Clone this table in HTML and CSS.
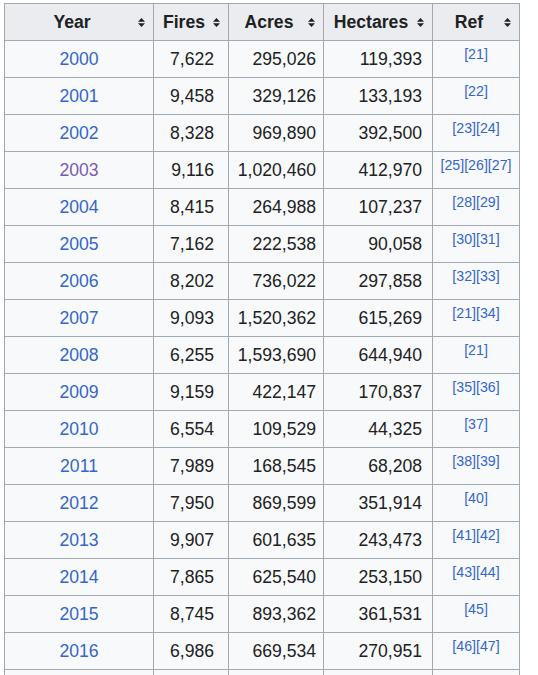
FILE: index.html
```html
<!DOCTYPE html>
<html lang="en">
<head>
  <meta charset="UTF-8" />
  <title>California wildfires by year</title>
  <link rel="stylesheet" href="styles.css">
</head>
<body>

  <table class="wikitable">
    <colgroup>
      <col class="c-year">
      <col class="c-fires">
      <col class="c-acres">
      <col class="c-hectares">
      <col class="c-ref">
    </colgroup>
    <thead>
      <tr>
        <th>Year<svg class="sort" viewBox="0 0 7 9"><polygon points="3.5,0 7,3.8 0,3.8"/><polygon points="0,5.2 7,5.2 3.5,9"/></svg></th>
        <th>Fires<svg class="sort" viewBox="0 0 7 9"><polygon points="3.5,0 7,3.8 0,3.8"/><polygon points="0,5.2 7,5.2 3.5,9"/></svg></th>
        <th>Acres<svg class="sort" viewBox="0 0 7 9"><polygon points="3.5,0 7,3.8 0,3.8"/><polygon points="0,5.2 7,5.2 3.5,9"/></svg></th>
        <th>Hectares<svg class="sort" viewBox="0 0 7 9"><polygon points="3.5,0 7,3.8 0,3.8"/><polygon points="0,5.2 7,5.2 3.5,9"/></svg></th>
        <th>Ref<svg class="sort" viewBox="0 0 7 9"><polygon points="3.5,0 7,3.8 0,3.8"/><polygon points="0,5.2 7,5.2 3.5,9"/></svg></th>
      </tr>
    </thead>
    <tbody>
      <tr><td class="year"><a href="#">2000</a></td><td class="fires">7,622</td><td class="acres">295,026</td><td class="hectares">119,393</td><td class="ref"><a href="#">[21]</a></td></tr>
      <tr><td class="year"><a href="#">2001</a></td><td class="fires">9,458</td><td class="acres">329,126</td><td class="hectares">133,193</td><td class="ref"><a href="#">[22]</a></td></tr>
      <tr><td class="year"><a href="#">2002</a></td><td class="fires">8,328</td><td class="acres">969,890</td><td class="hectares">392,500</td><td class="ref"><a href="#">[23]</a><a href="#">[24]</a></td></tr>
      <tr><td class="year"><a href="#" class="visited">2003</a></td><td class="fires">9,116</td><td class="acres">1,020,460</td><td class="hectares">412,970</td><td class="ref"><a href="#">[25]</a><a href="#">[26]</a><a href="#">[27]</a></td></tr>
      <tr><td class="year"><a href="#">2004</a></td><td class="fires">8,415</td><td class="acres">264,988</td><td class="hectares">107,237</td><td class="ref"><a href="#">[28]</a><a href="#">[29]</a></td></tr>
      <tr><td class="year"><a href="#">2005</a></td><td class="fires">7,162</td><td class="acres">222,538</td><td class="hectares">90,058</td><td class="ref"><a href="#">[30]</a><a href="#">[31]</a></td></tr>
      <tr><td class="year"><a href="#">2006</a></td><td class="fires">8,202</td><td class="acres">736,022</td><td class="hectares">297,858</td><td class="ref"><a href="#">[32]</a><a href="#">[33]</a></td></tr>
      <tr><td class="year"><a href="#">2007</a></td><td class="fires">9,093</td><td class="acres">1,520,362</td><td class="hectares">615,269</td><td class="ref"><a href="#">[21]</a><a href="#">[34]</a></td></tr>
      <tr><td class="year"><a href="#">2008</a></td><td class="fires">6,255</td><td class="acres">1,593,690</td><td class="hectares">644,940</td><td class="ref"><a href="#">[21]</a></td></tr>
      <tr><td class="year"><a href="#">2009</a></td><td class="fires">9,159</td><td class="acres">422,147</td><td class="hectares">170,837</td><td class="ref"><a href="#">[35]</a><a href="#">[36]</a></td></tr>
      <tr><td class="year"><a href="#">2010</a></td><td class="fires">6,554</td><td class="acres">109,529</td><td class="hectares">44,325</td><td class="ref"><a href="#">[37]</a></td></tr>
      <tr><td class="year"><a href="#">2011</a></td><td class="fires">7,989</td><td class="acres">168,545</td><td class="hectares">68,208</td><td class="ref"><a href="#">[38]</a><a href="#">[39]</a></td></tr>
      <tr><td class="year"><a href="#">2012</a></td><td class="fires">7,950</td><td class="acres">869,599</td><td class="hectares">351,914</td><td class="ref"><a href="#">[40]</a></td></tr>
      <tr><td class="year"><a href="#">2013</a></td><td class="fires">9,907</td><td class="acres">601,635</td><td class="hectares">243,473</td><td class="ref"><a href="#">[41]</a><a href="#">[42]</a></td></tr>
      <tr><td class="year"><a href="#">2014</a></td><td class="fires">7,865</td><td class="acres">625,540</td><td class="hectares">253,150</td><td class="ref"><a href="#">[43]</a><a href="#">[44]</a></td></tr>
      <tr><td class="year"><a href="#">2015</a></td><td class="fires">8,745</td><td class="acres">893,362</td><td class="hectares">361,531</td><td class="ref"><a href="#">[45]</a></td></tr>
      <tr><td class="year"><a href="#">2016</a></td><td class="fires">6,986</td><td class="acres">669,534</td><td class="hectares">270,951</td><td class="ref"><a href="#">[46]</a><a href="#">[47]</a></td></tr>
      <tr><td class="year"><a href="#">2017</a></td><td class="fires">9,270</td><td class="acres">1,548,429</td><td class="hectares">626,634</td><td class="ref"><a href="#">[48]</a></td></tr>
    </tbody>
  </table>

</body>
</html>
```

FILE: styles.css
```css
* { box-sizing: border-box; }
body {
  font-family: "Liberation Sans", Arial, sans-serif;
  font-size: 17.6px;
  color: #202122;
  background: #fff;
  margin: 0;
  padding: 3px 0 0 4px;
}
a {
  color: #3366cc;
  text-decoration: none;
}
a.visited { color: #795cb2; }

.wikitable {
  border-collapse: collapse;
  table-layout: fixed;
  width: 515px;
  background: #f8f9fa;
  border: 1px solid #a2a9b1;
}
.c-year { width: 149px; }
.c-fires { width: 75px; }
.c-acres { width: 95px; }
.c-hectares { width: 109px; }
.c-ref { width: 87px; }

.wikitable th,
.wikitable td {
  border: 1px solid #a2a9b1;
  height: 37px;
  padding: 0 7px;
  line-height: 36px;
  white-space: nowrap;
}
.wikitable th {
  position: relative;
  background: #eaecf0;
  font-weight: bold;
  text-align: center;
  padding-right: 21px;
}
.sort {
  position: absolute;
  right: 8px;
  top: 14px;
  width: 7px;
  height: 9px;
  fill: #202122;
}

td.year { text-align: center; }
td.fires { text-align: right; padding-right: 14px; }
td.acres { text-align: right; padding-right: 7px; }
td.hectares { text-align: right; padding-right: 10px; }
td.ref {
  text-align: center;
  vertical-align: top;
  padding: 6px 2px 0;
  font-size: 14.2px;
  line-height: 1;
}
```
